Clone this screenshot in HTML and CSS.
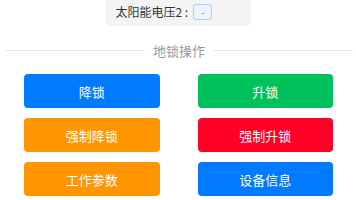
FILE: index.html
```html
<!DOCTYPE html>
<html lang="zh-CN">
<head>
    <meta charset="UTF-8">
    <meta name="viewport" content="width=device-width, initial-scale=1.0">
    <title>地锁操作</title>
    <link rel="stylesheet" href="styles.css">
</head>
<body>
    <div class="info-card">
        <div class="info-row">
            <span class="info-label">太阳能电压2 :</span>
            <span class="tag">-</span>
        </div>
    </div>

    <div class="divider">
        <span class="divider-line"></span>
        <span class="divider-text">地锁操作</span>
        <span class="divider-line"></span>
    </div>

    <div class="actions">
        <a class="btn btn-blue">降锁</a>
        <a class="btn btn-green">升锁</a>
        <a class="btn btn-orange">强制降锁</a>
        <a class="btn btn-red">强制升锁</a>
        <a class="btn btn-orange">工作参数</a>
        <a class="btn btn-blue">设备信息</a>
    </div>
</body>
</html>
```

FILE: styles.css
```css
body {
    font-family: "Noto Sans CJK SC", "Noto Sans", sans-serif;
    background: #fff;
    margin: 0;
    padding: 0;
    color: #333;
}
.info-card {
    width: 125px;
    margin: -6px auto 0;
    padding: 8px 10px 5px;
    background: #f4f4f5;
    border-radius: 4px;
}
.info-row {
    display: flex;
    align-items: center;
    height: 19px;
}
.info-label {
    font-size: 12px;
    line-height: 16px;
    color: #333;
}
.tag {
    display: inline-flex;
    align-items: center;
    justify-content: center;
    width: 17px;
    height: 14px;
    margin-left: 5px;
    background: #ecf5ff;
    border: 1px solid #a8d1ff;
    border-radius: 3px;
    color: #409eff;
    font-size: 10px;
}
.divider {
    display: flex;
    align-items: center;
    margin: 15px 0 15px;
    padding: 0 3px 0 5px;
    height: 18px;
}
.divider-line {
    flex: 1;
    height: 1px;
    background: #e8e8e8;
}
.divider-text {
    padding: 0 8px;
    font-size: 13px;
    color: #999;
}
.actions {
    display: grid;
    grid-template-columns: 1fr 1fr;
    column-gap: 38px;
    row-gap: 10px;
    padding: 0 23px 0 24px;
}
.btn {
    display: flex;
    align-items: center;
    justify-content: center;
    height: 34px;
    border-radius: 4px;
    color: #fff;
    font-size: 13px;
    text-decoration: none;
}
.btn-blue {
    background-color: #007aff;
}
.btn-green {
    background-color: #00c25c;
}
.btn-orange {
    background-color: #ff9500;
}
.btn-red {
    background-color: #ff0026;
}
```
